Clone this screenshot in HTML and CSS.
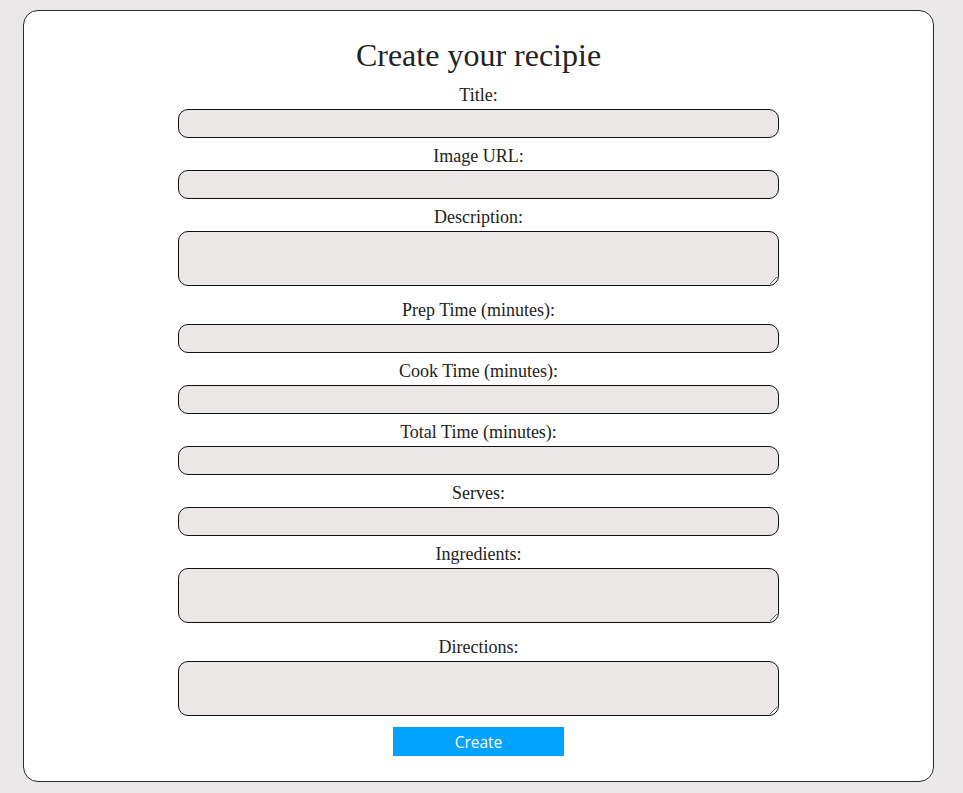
FILE: index.html
```html
<!DOCTYPE html>
<html lang="en">
<head>
<meta charset="utf-8">
<title>Create your recipie</title>
<link rel="stylesheet" href="styles.css">
</head>
<body>
<div class="card">
  <h1 class="heading">Create your recipie</h1>
  <form class="form">
    <label class="label" for="title">Title:</label>
    <input class="field" id="title" type="text">
    <label class="label" for="image">Image URL:</label>
    <input class="field" id="image" type="text">
    <label class="label" for="desc">Description:</label>
    <textarea class="field area" id="desc"></textarea>
    <label class="label" for="prep">Prep Time (minutes):</label>
    <input class="field" id="prep" type="text">
    <label class="label" for="cook">Cook Time (minutes):</label>
    <input class="field" id="cook" type="text">
    <label class="label" for="total">Total Time (minutes):</label>
    <input class="field" id="total" type="text">
    <label class="label" for="serves">Serves:</label>
    <input class="field" id="serves" type="text">
    <label class="label" for="ingr">Ingredients:</label>
    <textarea class="field area" id="ingr"></textarea>
    <label class="label" for="dir">Directions:</label>
    <textarea class="field area last" id="dir"></textarea>
    <button class="button" type="button">Create</button>
  </form>
</div>
</body>
</html>
```
FILE: styles.css
```css
html, body {
  margin: 0;
  padding: 0;
}
body {
  background: #eae8e8;
  font-family: "Liberation Serif", "Times New Roman", serif;
  color: #222;
  padding: 10px 29px 10px 23px;
}
.card {
  background: #fff;
  border: 1px solid #2a2a2a;
  border-radius: 15px;
  padding: 26px 0 25px;
  display: flex;
  flex-direction: column;
  align-items: center;
}
.heading {
  margin: 0 0 11px;
  font-size: 32px;
  font-weight: normal;
  line-height: 37px;
  color: #222;
}
.form {
  display: flex;
  flex-direction: column;
  align-items: center;
  width: 601px;
}
.label {
  font-size: 18px;
  line-height: 21px;
  margin-bottom: 3px;
  color: #222;
}
.field {
  box-sizing: border-box;
  width: 601px;
  height: 29px;
  margin: 0 0 8px;
  background: #ebe7e7;
  border: 1px solid #111;
  border-radius: 10px;
  font-family: "Liberation Serif", serif;
  font-size: 16px;
  padding: 2px 8px;
}
.area {
  height: 55px;
  margin-bottom: 14px;
  resize: vertical;
}
.area.last {
  margin-bottom: 11px;
}
.button {
  width: 171px;
  height: 29px;
  border: none;
  background: #00a3ff;
  color: #fff;
  font-family: "Open Sans", "Noto Sans", sans-serif;
  font-size: 15.5px;
  padding: 0;
  cursor: pointer;
}
```
